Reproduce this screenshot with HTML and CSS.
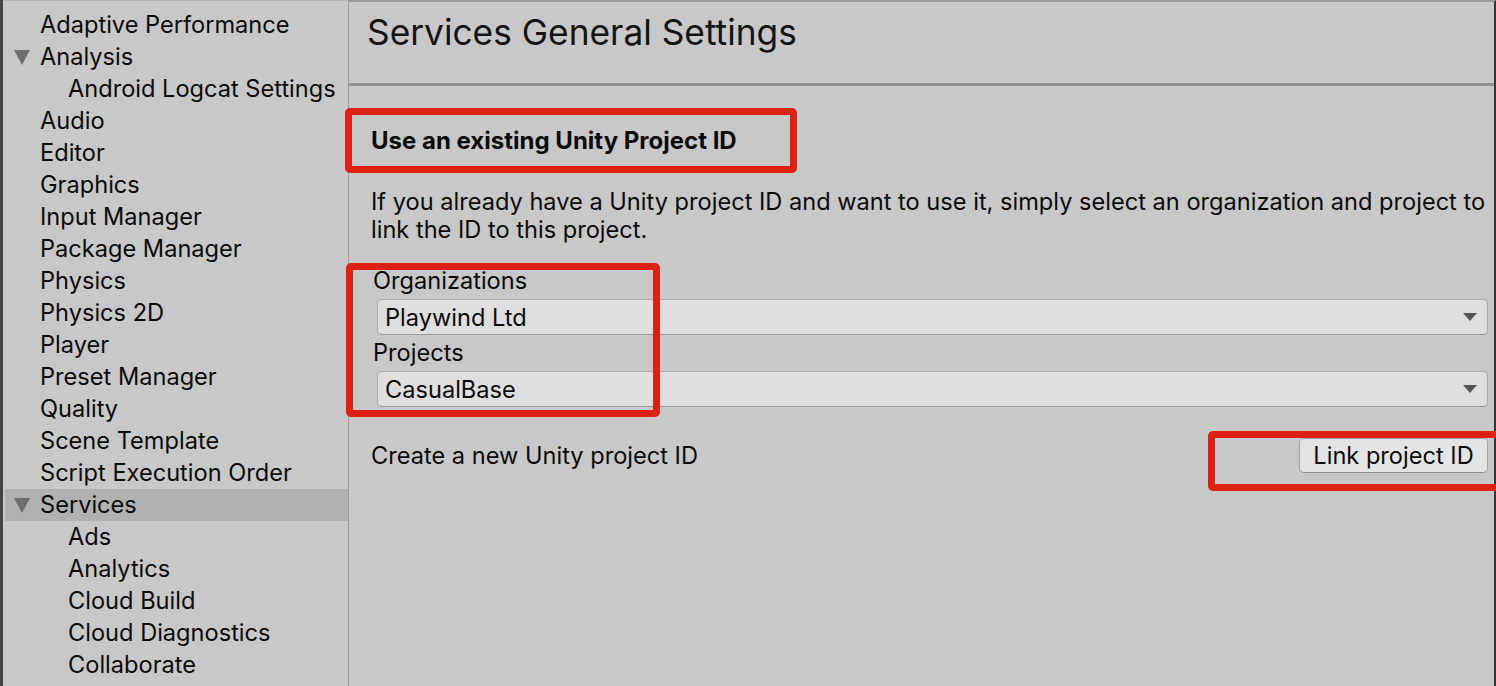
FILE: index.html
```html
<!DOCTYPE html>
<html>
<head>
<meta charset="utf-8">
<link rel="stylesheet" href="styles.css">
</head>
<body>
<div class="window">
  <nav class="sidebar">
    <div class="item">Adaptive Performance</div>
    <div class="item"><span class="tri"></span>Analysis</div>
    <div class="item sub">Android Logcat Settings</div>
    <div class="item">Audio</div>
    <div class="item">Editor</div>
    <div class="item">Graphics</div>
    <div class="item">Input Manager</div>
    <div class="item">Package Manager</div>
    <div class="item">Physics</div>
    <div class="item">Physics 2D</div>
    <div class="item">Player</div>
    <div class="item">Preset Manager</div>
    <div class="item">Quality</div>
    <div class="item">Scene Template</div>
    <div class="item">Script Execution Order</div>
    <div class="item selected"><span class="tri"></span>Services</div>
    <div class="item sub">Ads</div>
    <div class="item sub">Analytics</div>
    <div class="item sub">Cloud Build</div>
    <div class="item sub">Cloud Diagnostics</div>
    <div class="item sub">Collaborate</div>
  </nav>
  <main class="content">
    <header class="title-bar">
      <h1 class="title">Services General Settings</h1>
    </header>
    <section class="body">
      <h2 class="heading">Use an existing Unity Project ID</h2>
      <p class="desc">If you already have a Unity project ID and want to use it, simply select an organization and project to<br>link the ID to this project.</p>
      <div class="field">
        <div class="label">Organizations</div>
        <div class="dropdown"><span>Playwind Ltd</span><span class="arrow"></span></div>
      </div>
      <div class="field">
        <div class="label">Projects</div>
        <div class="dropdown"><span>CasualBase</span><span class="arrow"></span></div>
      </div>
      <div class="create-row">
        <span class="create-text">Create a new Unity project ID</span>
        <button class="btn">Link project ID</button>
      </div>
    </section>
  </main>
</div>
<div class="mark mark-heading"></div>
<div class="mark mark-fields"></div>
<div class="mark mark-button"></div>
</body>
</html>
```

FILE: styles.css
```css
html, body {
  margin: 0;
  padding: 0;
  width: 1496px;
  height: 686px;
  overflow: hidden;
  background: #c8c8c8;
  font-family: "Inter", "Noto Sans", sans-serif;
  color: #0b0b0b;
}
body { position: relative; }

.window {
  display: flex;
  height: 686px;
  border-left: 3px solid #454545;
  box-sizing: border-box;
}

.sidebar {
  width: 346px;
  flex: none;
  box-sizing: border-box;
  padding: 8px 0 0 2px;
  border-right: 1px solid #9c9c9c;
  border-top: 1px solid #b4b4b4;
}
.item {
  position: relative;
  height: 32px;
  line-height: 32px;
  font-size: 23.6px;
  padding-left: 35px;
  white-space: nowrap;
}
.item.sub { padding-left: 63px; }
.item.selected { background: #b1b1b1; }
.tri {
  position: absolute;
  left: 9px;
  top: 9px;
  width: 0;
  height: 0;
  border-left: 8.5px solid transparent;
  border-right: 8.5px solid transparent;
  border-top: 15px solid #6f6f6f;
}

.content {
  flex: 1;
  border-top: 2px solid #9a9a9a;
  border-right: 2px solid #30353c;
  box-sizing: border-box;
  min-width: 0;
}
.title-bar {
  height: 81px;
  border-bottom: 3px solid #929292;
  box-sizing: content-box;
  padding-left: 18px;
}
.title {
  margin: 0;
  padding-top: 11px;
  font-size: 35.3px;
  line-height: 40px;
  font-weight: 400;
  color: #141414;
}

.body {
  padding: 39px 6px 0 22px;
}
.heading {
  margin: 0;
  font-size: 24px;
  line-height: 32px;
  font-weight: 700;
}
.desc {
  margin: 31px 0 0 0;
  font-size: 23.6px;
  line-height: 28px;
  white-space: nowrap;
}
.field { margin-top: 21px; }
.field + .field { margin-top: 2px; }
.label {
  font-size: 23.6px;
  line-height: 32px;
  padding-left: 2px;
}
.dropdown {
  margin: 2px 0 0 6px;
  height: 36px;
  box-sizing: border-box;
  background: #dfdfdf;
  border: 1px solid #aaaaaa;
  border-bottom-color: #999999;
  border-radius: 5px;
  display: flex;
  align-items: center;
  justify-content: space-between;
  padding: 0 10px 0 7px;
  font-size: 23.6px;
}
.arrow {
  width: 0;
  height: 0;
  border-left: 7.5px solid transparent;
  border-right: 7.5px solid transparent;
  border-top: 8px solid #555555;
}
.create-row {
  margin-top: 31px;
  display: flex;
  align-items: center;
  justify-content: space-between;
  height: 35px;
}
.create-text { font-size: 23.6px; }
.btn {
  width: 189px;
  height: 35px;
  box-sizing: border-box;
  background: #e4e4e4;
  border: 1px solid #a3a3a3;
  border-bottom-color: #8f8f8f;
  border-radius: 5px;
  font-family: inherit;
  font-size: 23.6px;
  color: #0b0b0b;
  padding: 0;
}

.mark {
  position: absolute;
  border: 7px solid #dc2114;
  border-radius: 5px;
  box-sizing: border-box;
}
.mark-heading { left: 345px; top: 108px; width: 452px; height: 65px; }
.mark-fields { left: 346px; top: 263px; width: 314px; height: 154px; }
.mark-button { left: 1208px; top: 431px; width: 300px; height: 60px; }
```
